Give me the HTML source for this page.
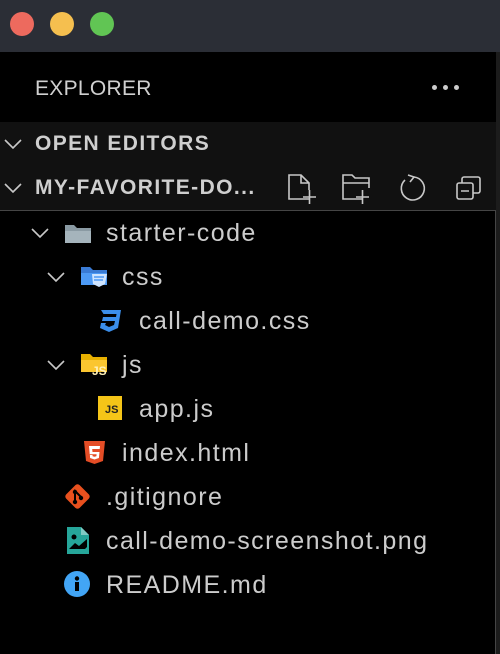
<!DOCTYPE html>
<html><head><meta charset="utf-8"><style>
*{margin:0;padding:0;box-sizing:border-box}
body{width:500px;height:654px;overflow:hidden;background:#111;font-family:"Liberation Sans",sans-serif;position:relative;color:#ccc}
.abs{position:absolute}
.t{position:absolute;font-size:25px;letter-spacing:1.45px;color:#cccccc;line-height:28px;white-space:nowrap}
.h{position:absolute;font-size:21px;font-weight:bold;color:#cfcfcf;line-height:24px;letter-spacing:1.4px;white-space:nowrap}
svg{position:absolute;overflow:visible}
</style></head><body>
<div class="abs" style="left:0;top:0;width:500px;height:52px;background:#2b2e36"></div>
<div class="abs" style="left:10px;top:12px;width:24px;height:24px;border-radius:50%;background:#ed6a5e"></div>
<div class="abs" style="left:50px;top:12px;width:24px;height:24px;border-radius:50%;background:#f5bf4f"></div>
<div class="abs" style="left:90px;top:12px;width:24px;height:24px;border-radius:50%;background:#61c554"></div>
<div class="abs" style="left:0;top:52px;width:496px;height:70px;background:#000"></div>
<div class="abs" style="left:496px;top:52px;width:4px;height:602px;background:#1c1c1c"></div>
<div class="t" style="left:35px;top:75px;font-size:21px;letter-spacing:0.3px;color:#d0d0d0">EXPLORER</div>
<div class="abs" style="left:432px;top:85px;width:5px;height:5px;border-radius:50%;background:#ccc;box-shadow:11px 0 #ccc,22px 0 #ccc"></div>
<svg width="500" height="654" style="left:0;top:0" fill="none" stroke="#c8c8c8" stroke-width="1.6">
<path d="M5 140 l8 8 l8 -8"/>
<path d="M5 184 l8 8 l8 -8"/>
<path d="M310 199 H289 V175 H301 L309 183 V190 M301 175 V183 H309 M303 197 H316 M309.5 190 V204"/>
<path d="M362 199 H343 V175 H352 L355 178 H369 V188 M343 183 H369 M356 197 H369 M362.5 190 V204"/>
<path d="M405 180 A11.5 11.5 0 1 0 414 177"/>
<path d="M408 175 L414 177 L410 182"/>
<rect x="457" y="183" width="16" height="16" rx="2"/>
<path d="M462 183 V179 a2 2 0 0 1 2 -2 H478 a2 2 0 0 1 2 2 V191 a2 2 0 0 1 -2 2 H473 M461 191 H469"/>
</svg>
<div class="h" style="left:35px;top:132px">OPEN EDITORS</div>
<div class="h" style="left:35px;top:176px">MY-FAVORITE-DO...</div>
<div class="abs" style="left:0;top:210px;width:496px;height:444px;background:#000;border-top:1.5px solid #454545;border-right:1.5px solid #454545"></div>
<svg width="500" height="654" style="left:0;top:0" fill="none" stroke="#c8c8c8" stroke-width="1.6">
<path d="M32 229 l8 8 l8 -8"/>
<path d="M48 273 l8 8 l8 -8"/>
<path d="M48 361 l8 8 l8 -8"/>
</svg>
<svg width="30" height="24" style="left:64px;top:222px"><path d="M1 3 h9 l3 3 h14 v15 h-26z" fill="#8a9aa3"/><path d="M1 9 h26 v12 h-26z" fill="#a5b4bc"/></svg>
<div class="t" style="left:106px;top:219px">starter-code</div>
<svg width="30" height="24" style="left:80px;top:265px"><path d="M1 2 h9 l3 3 h14 v15 h-26z" fill="#3a7bd5"/><path d="M1 8 h26 v12 h-26z" fill="#4d9af5"/><path d="M12 9 h15 l-2 10 l-6 3 l-6 -3z" fill="#cfe4ff"/><path d="M14 12 h10 M14 15 h9" stroke="#4d9af5" stroke-width="1.5"/></svg>
<div class="t" style="left:122px;top:263px">css</div>
<svg width="26" height="26" style="left:97px;top:308px"><path d="M4 2 h20 l-3 18 l-9 4 l-9 -4 l1 -5 h5 l-1 2 l4 2 l5 -2 l1 -4 h-13 l1 -4 h13 l0.5 -3 h-13z" fill="#3b8eea"/></svg>
<div class="t" style="left:139px;top:307px">call-demo.css</div>
<svg width="30" height="26" style="left:80px;top:352px"><path d="M1 2 h9 l3 3 h14 v15 h-26z" fill="#e7b000"/><path d="M1 8 h26 v12 h-26z" fill="#fbc630"/><text x="12" y="23" font-family="Liberation Sans" font-weight="bold" font-size="12" fill="#fff0b8">JS</text></svg>
<div class="t" style="left:122px;top:351px">js</div>
<div class="abs" style="left:98px;top:396px;width:24px;height:24px;background:#f5c518"></div>
<div class="abs" style="left:105px;top:404px;font-size:11px;font-weight:bold;color:#222;font-family:'Liberation Sans',sans-serif">JS</div>
<div class="t" style="left:139px;top:395px">app.js</div>
<svg width="24" height="26" style="left:83px;top:440px"><path d="M1 1 h21 l-2 20 l-8.5 3 l-8.5 -3z" fill="#e44d26"/><path d="M6 6 h11 l-0.3 3 h-7.5 l0.3 3 h7 l-0.6 6 l-4.4 1.5 l-4.4 -1.5 l-0.2 -3 h2.6 l0.1 1.2 l1.9 0.6 l1.9 -0.6 l0.2 -2 h-6.9z" fill="#fff"/></svg>
<div class="t" style="left:122px;top:439px">index.html</div>
<svg width="28" height="28" style="left:64px;top:483px"><rect x="4" y="4" width="19" height="19" rx="3" transform="rotate(45 13.5 13.5)" fill="#e8501e"/><path d="M10 7 l8 8 M11 9 v10" stroke="#000" stroke-width="2"/><circle cx="11" cy="19" r="2.2" fill="#000"/><circle cx="17" cy="15" r="2.2" fill="#000"/><circle cx="11" cy="9" r="2.2" fill="#000"/></svg>
<div class="t" style="left:106px;top:483px">.gitignore</div>
<svg width="24" height="28" style="left:67px;top:527px"><path d="M0 0 h14 l8 8 v19 h-22z" fill="#26a69a"/><path d="M14 0 v8 h8" fill="#80cbc4"/><circle cx="7" cy="10" r="2.5" fill="#000"/><path d="M2 22 l6 -6 l4 3 l8 -7 v8 l-2 2 h-16z" fill="#000"/></svg>
<div class="t" style="left:106px;top:527px">call-demo-screenshot.png</div>
<svg width="28" height="28" style="left:64px;top:571px"><circle cx="13" cy="13" r="13" fill="#42a5f5"/><rect x="11" y="11" width="4" height="9" fill="#000"/><circle cx="13" cy="7.5" r="2.2" fill="#000"/></svg>
<div class="t" style="left:106px;top:571px">README.md</div>
</body></html>
